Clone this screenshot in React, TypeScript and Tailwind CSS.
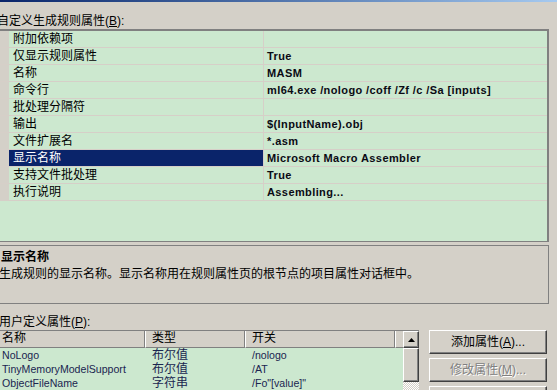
import React from 'react';

const rows: [string, string][] = [
  ['附加依赖项', ''],
  ['仅显示规则属性', 'True'],
  ['名称', 'MASM'],
  ['命令行', 'ml64.exe /nologo /coff /Zf /c /Sa [inputs]'],
  ['批处理分隔符', ''],
  ['输出', '$(InputName).obj'],
  ['文件扩展名', '*.asm'],
  ['显示名称', 'Microsoft Macro Assembler'],
  ['支持文件批处理', 'True'],
  ['执行说明', 'Assembling...'],
];

const props = [
  ['NoLogo', '布尔值', '/nologo'],
  ['TinyMemoryModelSupport', '布尔值', '/AT'],
  ['ObjectFileName', '字符串', '/Fo"[value]"'],
];

const raised =
  'border border-t-white border-l-white border-r-[#404040] border-b-[#404040] shadow-[inset_-1px_-1px_#808080]';

function Button({ label, mnemonic, disabled }: { label: string; mnemonic: string; disabled?: boolean }) {
  return (
    <div
      className={`${raised} h-[24px] w-[118px] shrink-0 bg-[#d4d0c8] flex items-center justify-center text-[12px] leading-[14px] ${
        disabled ? 'text-[#808080] [text-shadow:1px_1px_#ffffff]' : 'text-black'
      }`}
    >
      {label}(<span className="underline">{mnemonic}</span>)...
    </div>
  );
}

export default function App() {
  const selected = 7;

  return (
    <div className="w-[557px] h-[390px] overflow-hidden bg-[#d4d0c8] text-black font-['Liberation_Sans','Noto_Sans_CJK_SC',sans-serif]">
      <div className="h-[2px] bg-linear-to-r from-[#0a246a] to-[#a6caf0]" />

      <div className="h-[27px] pt-[12px] ml-[-3px] text-[12px] leading-[14px] whitespace-nowrap">
        自定义生成规则属性(<span className="underline">B</span>):
      </div>

      {/* property grid */}
      <div className="ml-[-2px] w-[551px] h-[213px] bg-[#cce8cf] border-t-2 border-r-2 border-b border-l border-[#808080]">
        {rows.map(([name, value], i) => (
          <div key={name} className="flex h-[17px] border-b border-[#d6cfc8]">
            <div className="w-[10px] shrink-0 bg-[#d4d0c8]" />
            <div
              className={`w-[255px] shrink-0 pl-[4px] border-r border-[#d6cfc8] text-[12px] leading-[16px] whitespace-nowrap ${
                i === selected ? 'bg-[#0a246a] text-white' : ''
              }`}
            >
              {name}
            </div>
            <div className="flex-1 pl-[3px] font-bold text-[11px] tracking-[0.4px] leading-[16px] text-[#0a0a14] whitespace-nowrap">
              {value}
            </div>
          </div>
        ))}
      </div>

      {/* description */}
      <div className="mt-[3px] ml-[-2px] w-[551px] h-[59px] border border-[#808080] pl-[2px] pt-[4px]">
        <div className="font-bold text-[12px] leading-[14px]">显示名称</div>
        <div className="mt-[3px] ml-[-2px] text-[12px] leading-[14px] whitespace-nowrap">
          生成规则的显示名称。显示名称用在规则属性页的根节点的项目属性对话框中。
        </div>
      </div>

      <div className="h-[26px] pt-[11px] ml-[-1px] text-[12px] leading-[14px] whitespace-nowrap">
        用户定义属性(<span className="underline">P</span>):
      </div>

      <div className="flex items-start gap-[10px]">
        {/* list view */}
        <div className="ml-[-2px] w-[421px] h-[80px] border-t border-l border-[#808080] flex">
          <div className="flex-1 flex flex-col bg-[#cce8cf]">
            <div className="flex h-[17px] bg-[#d4d0c8] text-[12px] leading-[15px]">
              <div className="w-[146px] border-r border-r-[#808080] border-b border-b-[#808080] pl-[3px]">名称</div>
              <div className="w-[100px] border-l border-l-white border-r border-r-[#808080] border-b border-b-[#808080] pl-[6px]">
                类型
              </div>
              <div className="w-[150px] border-l border-l-white border-r border-r-[#808080] border-b border-b-[#808080] pl-[6px]">
                开关
              </div>
              <div className="flex-1 border-l border-l-white border-b border-b-[#808080]" />
            </div>
            {props.map(([n, t, s]) => (
              <div key={n} className="flex h-[14px] leading-[14px] text-[#1a2550] whitespace-nowrap">
                <div className="w-[146px] pl-[3px] text-[10.6px]">{n}</div>
                <div className="w-[100px] pl-[7px] text-[12px]">{t}</div>
                <div className="w-[150px] pl-[7px] text-[10.6px]">{s}</div>
              </div>
            ))}
          </div>
          {/* scrollbar */}
          <div className="w-[16px] shrink-0 flex flex-col">
            <div className={`${raised} h-[17px] bg-[#d4d0c8] flex items-center justify-center`}>
              <svg width="7" height="4" viewBox="0 0 7 4">
                <path d="M3.5 0 L7 4 L0 4 Z" fill="#000" />
              </svg>
            </div>
            <div className={`${raised} h-[34px] bg-[#d4d0c8]`} />
            <div className="flex-1 bg-[repeating-conic-gradient(#ffffff_0_25%,#d4d0c8_0_50%)] bg-[length:2px_2px]" />
          </div>
        </div>

        {/* buttons */}
        <div className="flex flex-col gap-[4px]">
          <Button label="添加属性" mnemonic="A" />
          <Button label="修改属性" mnemonic="M" disabled />
          <div className={`${raised} h-[24px] w-[118px] bg-[#d4d0c8]`} />
        </div>
      </div>
    </div>
  );
}
